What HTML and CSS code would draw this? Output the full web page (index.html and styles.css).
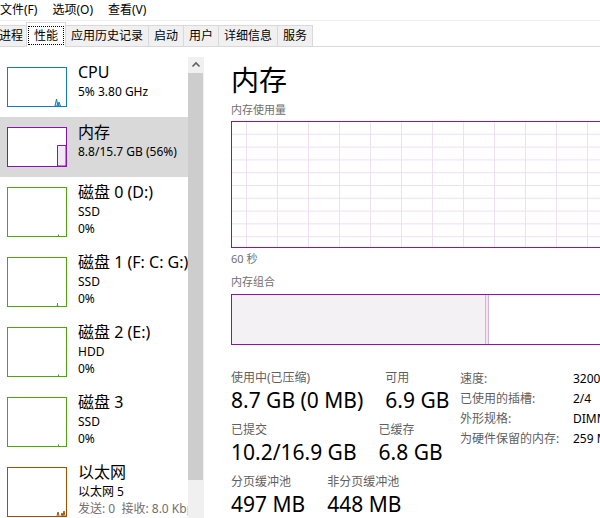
FILE: index.html
```html
<!DOCTYPE html>
<html lang="zh-CN">
<head>
    <meta charset="UTF-8">
    <title>任务管理器</title>
    <link rel="stylesheet" href="styles.css">
</head>
<body>
    <div class="menubar">
        <span>文件(F)</span>
        <span>选项(O)</span>
        <span>查看(V)</span>
    </div>

    <div class="tabs">
        <div class="tab first">进程</div>
        <div class="tab active"><span class="focus">性能</span></div>
        <div class="tab">应用历史记录</div>
        <div class="tab">启动</div>
        <div class="tab">用户</div>
        <div class="tab">详细信息</div>
        <div class="tab">服务</div>
    </div>

    <div class="main">
        <div class="sidebar">
            <div class="list">
                <div class="item">
                    <div class="thumb cpu">
                        <svg width="58" height="38" viewBox="0 0 58 38">
                            <path d="M47 38 L48.5 31 L50 38 L51 34 L52.5 38 Z" fill="#d4e7f5" stroke="#117dbb" stroke-width="1"/>
                        </svg>
                    </div>
                    <div class="info">
                        <div class="title">CPU</div>
                        <div class="sub">5% 3.80 GHz</div>
                    </div>
                </div>
                <div class="item selected">
                    <div class="thumb mem">
                        <svg width="58" height="38" viewBox="0 0 58 38">
                            <path d="M49.5 38 L49.5 17.5 L58 17.5 L58 38 Z" fill="#f1e9f4" stroke="#8b12ae" stroke-width="1"/>
                        </svg>
                    </div>
                    <div class="info">
                        <div class="title">内存</div>
                        <div class="sub">8.8/15.7 GB (56%)</div>
                    </div>
                </div>
                <div class="item">
                    <div class="thumb disk tall">
                        <svg width="58" height="48" viewBox="0 0 58 48">
                            <path d="M50.5 48 L50.5 46.5" stroke="#4da60c" stroke-width="1"/>
                        </svg>
                    </div>
                    <div class="info">
                        <div class="title">磁盘 0 (D:)</div>
                        <div class="sub">SSD</div>
                        <div class="sub">0%</div>
                    </div>
                </div>
                <div class="item">
                    <div class="thumb disk tall">
                        <svg width="58" height="48" viewBox="0 0 58 48">
                            <path d="M49.5 48 L49.5 45 M48.5 48 L50.5 48" stroke="#4da60c" stroke-width="1"/>
                        </svg>
                    </div>
                    <div class="info">
                        <div class="title">磁盘 1 (F: C: G:)</div>
                        <div class="sub">SSD</div>
                        <div class="sub">0%</div>
                    </div>
                </div>
                <div class="item">
                    <div class="thumb disk tall">
                        <svg width="58" height="48" viewBox="0 0 58 48">
                            <path d="M50.5 48 L50.5 46.5" stroke="#4da60c" stroke-width="1"/>
                        </svg>
                    </div>
                    <div class="info">
                        <div class="title">磁盘 2 (E:)</div>
                        <div class="sub">HDD</div>
                        <div class="sub">0%</div>
                    </div>
                </div>
                <div class="item">
                    <div class="thumb disk tall">
                        <svg width="58" height="48" viewBox="0 0 58 48">
                            <path d="M50.5 48 L50.5 46.5" stroke="#4da60c" stroke-width="1"/>
                        </svg>
                    </div>
                    <div class="info">
                        <div class="title">磁盘 3</div>
                        <div class="sub">SSD</div>
                        <div class="sub">0%</div>
                    </div>
                </div>
                <div class="item">
                    <div class="thumb eth tall">
                        <svg width="58" height="48" viewBox="0 0 58 48">
                            <path d="M49 48 L50 44 L51 48 M53 48 L54 45 L55 48 L56 43 L57 48" fill="none" stroke="#a74f01" stroke-width="1"/>
                        </svg>
                    </div>
                    <div class="info">
                        <div class="title">以太网</div>
                        <div class="sub">以太网 5</div>
                        <div class="sub dim">发送: 0 &nbsp;接收: 8.0 Kbps</div>
                    </div>
                </div>
            </div>
            <div class="scrollbar">
                <div class="arrow">
                    <svg width="16" height="16" viewBox="0 0 16 16">
                        <polyline points="4.5,9.5 8,6 11.5,9.5" fill="none" stroke="#606060" stroke-width="1.6"/>
                    </svg>
                </div>
                <div class="bar"></div>
            </div>
        </div>

        <div class="detail">
            <div class="heading">内存</div>
            <div class="caption">内存使用量</div>
            <div class="graph"></div>
            <div class="caption axis">60 秒</div>
            <div class="caption">内存组合</div>
            <div class="combo">
                <div class="inuse"></div>
                <div class="modified"></div>
            </div>

            <div class="stats">
                <div class="stat-left">
                    <div class="stat-row">
                        <div class="stat">
                            <div class="label">使用中(已压缩)</div>
                            <div class="value">8.7 GB (0 MB)</div>
                        </div>
                        <div class="stat">
                            <div class="label">可用</div>
                            <div class="value">6.9 GB</div>
                        </div>
                    </div>
                    <div class="stat-row">
                        <div class="stat">
                            <div class="label">已提交</div>
                            <div class="value">10.2/16.9 GB</div>
                        </div>
                        <div class="stat">
                            <div class="label">已缓存</div>
                            <div class="value">6.8 GB</div>
                        </div>
                    </div>
                    <div class="stat-row">
                        <div class="stat">
                            <div class="label">分页缓冲池</div>
                            <div class="value">497 MB</div>
                        </div>
                        <div class="stat">
                            <div class="label">非分页缓冲池</div>
                            <div class="value">448 MB</div>
                        </div>
                    </div>
                </div>
                <div class="specs">
                    <div class="spec-label">速度:</div>
                    <div class="spec-value">3200 MHz</div>
                    <div class="spec-label">已使用的插槽:</div>
                    <div class="spec-value">2/4</div>
                    <div class="spec-label">外形规格:</div>
                    <div class="spec-value">DIMM</div>
                    <div class="spec-label">为硬件保留的内存:</div>
                    <div class="spec-value">259 MB</div>
                </div>
            </div>
        </div>
    </div>
</body>
</html>
```

FILE: styles.css
```css
body {
    margin: 0;
    width: 600px;
    height: 518px;
    overflow: hidden;
    background-color: white;
    font-family: "Noto Sans", "Noto Sans CJK SC", sans-serif;
    color: black;
}

.menubar {
    display: flex;
    gap: 15px;
    height: 20px;
    font-size: 12px;
    line-height: 20px;
    border-bottom: 1px solid #f0f0f0;
}

.tabs {
    display: flex;
    align-items: flex-end;
    height: 25px;
    font-size: 12px;
    border-bottom: 1px solid #d9d9d9;
}
.tab {
    height: 20px;
    line-height: 19px;
    padding: 0 5px;
    background-color: #f0f0f0;
    border: 1px solid #d9d9d9;
    border-bottom: none;
    margin-right: -1px;
    white-space: nowrap;
}
.tab.first {
    margin-left: -7px;
}
.tab.active {
    position: relative;
    z-index: 1;
    height: 24px;
    padding: 0 2px;
    margin: 0 -1px -1px -2px;
    background-color: white;
    display: flex;
    align-items: center;
}
.focus {
    display: block;
    padding: 0 5px;
    line-height: 17px;
    outline: 1px dotted black;
}

.main {
    display: flex;
    height: 472px;
}

.sidebar {
    display: flex;
    padding-top: 10px;
    width: 204px;
    flex-shrink: 0;
}
.list {
    width: 188px;
    overflow: hidden;
}
.item {
    display: flex;
    gap: 11px;
    padding: 10px 0 10px 7px;
    white-space: nowrap;
}
.item.selected {
    background-color: #d9d9d9;
}
.thumb {
    width: 58px;
    height: 38px;
    flex-shrink: 0;
    background-color: white;
    border: 1px solid;
}
.thumb svg {
    display: block;
}
.thumb.tall {
    height: 48px;
}
.thumb.cpu { border-color: #117dbb; }
.thumb.mem { border-color: #8b12ae; }
.thumb.disk { border-color: #4da60c; }
.thumb.eth { border-color: #a74f01; }

.info {
    margin-top: -5px;
    overflow: hidden;
}
.title {
    font-size: 16px;
    line-height: 21px;
}
.sub {
    font-size: 12px;
    line-height: 17px;
}
.sub.dim {
    color: #707070;
}

.scrollbar {
    width: 16px;
    background-color: #f0f0f0;
    display: flex;
    flex-direction: column;
}
.arrow {
    height: 16px;
}
.arrow svg {
    display: block;
}
.bar {
    height: 407px;
    margin-right: 1px;
    background-color: #cdcdcd;
}

.detail {
    padding: 15px 0 0 27px;
    width: 420px;
    flex-shrink: 0;
}
.heading {
    font-size: 28px;
    line-height: 36px;
    height: 40px;
}
.caption {
    font-size: 11px;
    line-height: 15px;
    color: #707070;
}
.graph {
    margin-top: 4px;
    height: 125px;
    border: 1px solid #8b12ae;
    background-color: white;
    background-image:
        linear-gradient(to right, transparent 30px, #eedff2 30px),
        linear-gradient(to bottom, transparent 11.8px, #eedff2 11.8px);
    background-size: 31px 100%, 100% 12.8px;
    background-position: -16px 0, 0 0;
}
.caption.axis {
    margin-top: 3px;
    margin-bottom: 8px;
}
.combo {
    margin-top: 5px;
    height: 49px;
    border: 1px solid #8b12ae;
    display: flex;
}
.inuse {
    width: 253px;
    background-color: #f3f1f4;
}
.modified {
    width: 2px;
    border-left: 1px solid #d4b3dd;
    border-right: 1px solid #d4b3dd;
    background-color: #efe6f1;
}

.stats {
    display: flex;
    margin-top: 25px;
}
.stat-left {
    width: 229px;
    flex-shrink: 0;
}
.stat-row {
    display: flex;
    gap: 22px;
    height: 52px;
}
.label {
    font-size: 12px;
    line-height: 16px;
    color: #5f5f5f;
}
.value {
    font-size: 21px;
    line-height: 29px;
    white-space: nowrap;
}
.specs {
    display: grid;
    grid-template-columns: 113px auto;
    font-size: 12px;
    line-height: 20px;
    align-content: start;
    margin-top: -1px;
    white-space: nowrap;
}
.spec-label {
    color: #5f5f5f;
}
```
